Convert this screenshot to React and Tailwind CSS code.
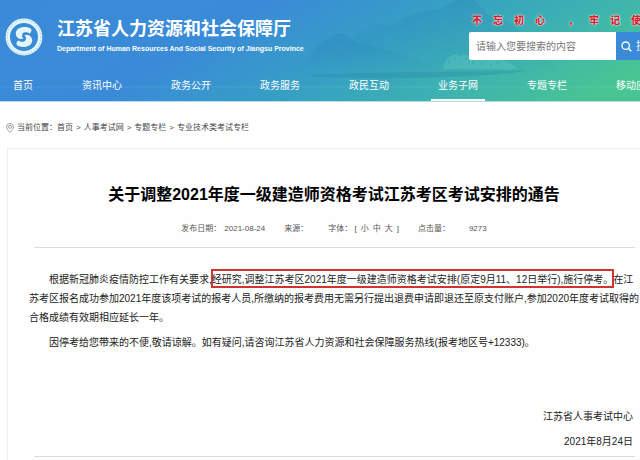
import React, { useState } from 'react';

const navItems = ['首页', '资讯中心', '政务公开', '政务服务', '政民互动', '业务子网', '专题专栏', '移动应用'];
const crumbs = ['首页', '人事考试网', '专题专栏', '专业技术类考试专栏'];

const Logo = () => (
  <svg className="w-[38px] h-[40px] shrink-0" viewBox="0 0 38 40" preserveAspectRatio="none" aria-hidden="true">
    <circle cx="19" cy="20" r="16.2" fill="#3b8bd6" stroke="#e4f5fc" strokeWidth="4.4" />
    <circle cx="19" cy="20" r="17" fill="none" stroke="#8fc3ec" strokeWidth="1.2" strokeDasharray="1.4 1.6" opacity="0.7" />
    <path
      d="M25.5 11.5C20 8.500 11 10 10.800 16.500C10.800 21 15 23 18.500 21.500C17 20.500 16.500 18.500 17.500 16.800C19 14.500 22.500 15 24.500 16.500C27 15 27 12.500 25.500 11.500Z"
      fill="#e4f5fc"
    />
    <path
      d="M12.500 28.500C18 31.500 27 30 27.200 23.500C27.200 19 23 17 19.500 18.500C21 19.500 21.500 21.500 20.500 23.200C19 25.500 15.500 25 13.500 23.500C11 25 11 27.500 12.500 28.500Z"
      fill="#e4f5fc"
    />
  </svg>
);

const Scenery = () => (
  <svg
    className="absolute inset-0 w-full h-full"
    viewBox="0 0 640 101"
    preserveAspectRatio="none"
    aria-hidden="true"
  >
    <defs>
      <linearGradient id="ridge" x1="0" y1="0" x2="0" y2="1">
        <stop offset="0" stopColor="#2a7fb4" stopOpacity="0.26" />
        <stop offset="1" stopColor="#2a7fb4" stopOpacity="0" />
      </linearGradient>
    </defs>
    <path
      d="M300 76L318 46L334 38L350 40L364 28L378 23L390 26L404 18L420 12L440 9L456 0H474L490 16L510 24L530 40L560 76Z"
      fill="url(#ridge)"
    />
    <path d="M290 76L318 44L332 35L344 34L356 42L380 48L420 60L450 76Z" fill="url(#ridge)" />
    <path d="M305 75C380 71 450 73 530 70C500 77 400 80 320 77Z" fill="#237c9c" opacity="0.25" />
    <path d="M443 69C445 57 452 53 460 56C470 52 478 60 488 59C500 57 510 62 518 69Z" fill="#6fd0c8" opacity="0.3" />
    <path d="M448 62h2m4 -3h2m3 5h2m4 -5h2m5 4h2m6 1h2m8 1h2m5 -2h2" stroke="#2a8a94" opacity="0.5" />
    <path d="M0 87H640" stroke="#fff" opacity="0.08" />
  </svg>
);

const Slogan = () => (
  <div className="flex gap-[11px] pl-[3px] text-[10px] leading-[12px] font-black text-[#d3222f] font-['Noto_Sans_CJK_SC',sans-serif] [text-shadow:0_0_1px_#fff,0_0_2px_#fff]">
    <span>不</span>
    <span>忘</span>
    <span>初</span>
    <span>心</span>
    <span className="ml-[12px]">，</span>
    <span>牢</span>
    <span>记</span>
    <span>使</span>
    <span>命</span>
  </div>
);

const Header = () => {
  const [keyword, setKeyword] = useState('');

  return (
    <header className="relative overflow-hidden whitespace-nowrap text-white bg-[linear-gradient(150deg,#3a8ad8_0%,#3a8bd7_34%,#36a0c4_56%,#3db4ae_76%,#48c692_94%)] border-b border-[#b9dbe8]">
      <Scenery />
      <div className="relative flex h-[73px]">
        <div className="flex w-[469px] shrink-0 pl-[5px] pt-[17px]">
          <Logo />
          <div className="pl-[14px]">
            <h1 className="text-[18px] leading-6 font-bold">江苏省人力资源和社会保障厅</h1>
            <p className="text-[7px] leading-[10px] pt-[3px] font-bold">
              Department of Human Resources And Social Security of Jiangsu Province
            </p>
          </div>
        </div>
        <div className="shrink-0 pt-[14px]">
          <Slogan />
          <form className="flex h-7 mt-[6px]" onSubmit={(e) => e.preventDefault()}>
            <input
              className="w-[147px] rounded-l-[2px] bg-white px-[7px] text-[10px] text-gray-700 placeholder:text-[#777] outline-none"
              aria-label="请输入您要搜索的内容"
              placeholder="请输入您要搜索的内容"
              value={keyword}
              onChange={(e) => setKeyword(e.target.value)}
            />
            <button className="flex items-center gap-1 bg-[#3a8ad8] pl-[5px] pr-3 text-[11px]">
              <svg className="w-[11px] h-[11px]" viewBox="0 0 11 11" fill="none" stroke="#fff" aria-hidden="true">
                <circle cx="4.700" cy="4.700" r="3.700" strokeWidth="1.300" />
                <path d="M7.400 7.400L10.300 10.300" strokeWidth="1.500" />
              </svg>
              搜索
            </button>
          </form>
        </div>
      </div>
      <nav className="relative flex gap-[35px] pl-[6px] text-[10px] leading-[26px]">
        {navItems.map((item) => (
          <a
            key={item}
            href="#"
            className={
              item === '业务子网'
                ? 'shrink-0 px-[7px] border-b-2 border-white'
                : 'shrink-0 px-[7px] border-b-2 border-transparent'
            }
          >
            {item}
          </a>
        ))}
      </nav>
    </header>
  );
};

const Breadcrumb = () => (
  <div className="flex items-center pl-[6px] pt-[19px] pb-[13px] text-[8px] leading-[14px] text-[#444]">
    <svg className="w-2 h-[10px] mr-[3px]" viewBox="0 0 8 10" fill="none" stroke="#888" strokeWidth="0.8" aria-hidden="true">
      <path d="M4 9.400C2 7.200 0.600 5.600 0.600 3.900a3.400 3.400 0 0 1 6.800 0C7.400 5.600 6 7.200 4 9.400Z" />
      <circle cx="4" cy="3.900" r="1.500" />
    </svg>
    <span>当前位置：</span>
    {crumbs.map((crumb, i) => (
      <React.Fragment key={crumb}>
        {i > 0 && <span className="px-[3px]">&gt;</span>}
        <a href="#">{crumb}</a>
      </React.Fragment>
    ))}
  </div>
);

const Meta = () => (
  <div className="flex justify-center gap-[19px] text-[8px] leading-[14px] text-[#555]">
    <span>
      发布日期：<span className="pl-[3px]">2021-08-24</span>
    </span>
    <span className="w-[25px]">来源：</span>
    <span className="flex gap-[4px]">
      字体： [<button>小</button>
      <button>中</button>
      <button>大</button>]
    </span>
    <span>
      点击量：<span className="pl-[19px]">9273</span>
    </span>
  </div>
);

const Article = () => (
  <article className="ml-[7px] border-l border-t border-[#eeeeee] bg-[#fefefe] pt-[33px] pb-2">
    <div className="ml-5">
      <h2 className="mb-[14px] text-center text-[16px] leading-[26px] font-bold text-black">
        关于调整2021年度一级建造师资格考试江苏考区考试安排的通告
      </h2>
      <Meta />
    </div>
    <div className="ml-[26px] mr-[5px] mt-[11px] border-y border-[#dddddd] pt-[22px] pb-[5px] text-[10px] leading-[19px] text-[#222]">
      <div className="-ml-[5px] -mr-[5px]">
        <p className="indent-[20px] mb-[6px]">
          根据新冠肺炎疫情防控工作有关要求,
          <span className="pt-[4px] pb-[2px] outline-2 -outline-offset-1 outline-[#d0342f]">
            经研究,调整江苏考区2021年度一级建造师资格考试安排(原定9月11、12日举行),施行停考。
          </span>
          在江苏考区报名成功参加2021年度该项考试的报考人员,所缴纳的报考费用无需另行提出退费申请即退还至原支付账户,参加2020年度考试取得的合格成绩有效期相应延长一年。
        </p>
        <p className="indent-[20px]">
          因停考给您带来的不便,敬请谅解。如有疑问,请咨询江苏省人力资源和社会保障服务热线(报考地区号+12333)。
        </p>
      </div>
      <div className="mt-[55px] flex flex-col items-end gap-[6px] pr-[2px]">
        <p>江苏省人事考试中心</p>
        <p>2021年8月24日</p>
      </div>
    </div>
  </article>
);

const App = () => {
  return (
    <div className="overflow-hidden bg-white font-['Liberation_Sans','Noto_Sans_CJK_SC',sans-serif]">
      <Header />
      <Breadcrumb />
      <Article />
    </div>
  );
};

export default App;
